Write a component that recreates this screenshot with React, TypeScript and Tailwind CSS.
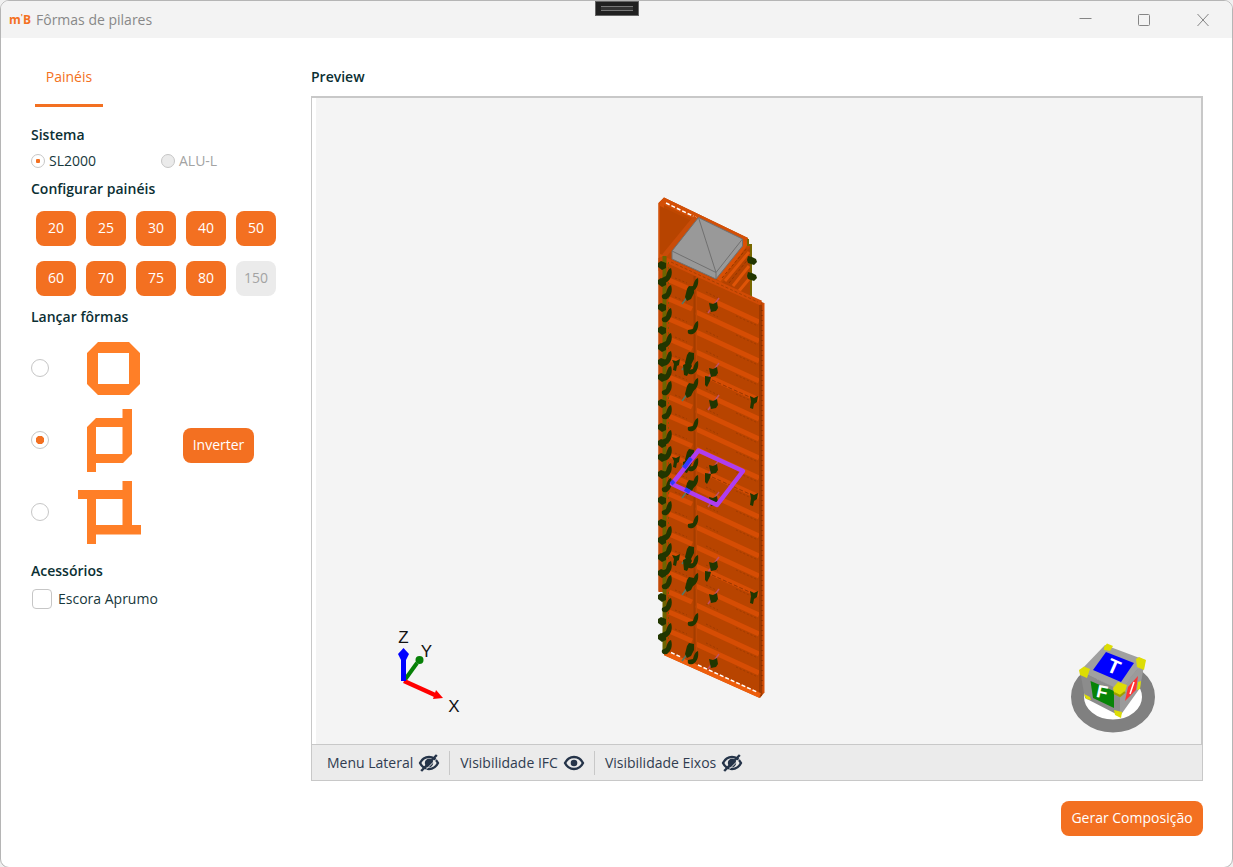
import { useState } from "react";
import type { ReactNode } from "react";

const panelSizes = [20, 25, 30, 40, 50, 60, 70, 75, 80, 150];

const edgeHooks = [275, 292, 315, 340, 358, 373, 388, 412, 437, 453, 470, 485, 508, 533, 550, 568, 582, 605, 630, 647];
const edgeBolts = [265, 282, 307, 330, 347, 362, 377, 403, 427, 443, 457, 474, 500, 523, 540, 557, 573, 597, 621, 637];
const seamHooks = [285, 328, 368, 385, 425, 465, 482, 522, 562, 580, 620, 658];
const tieRods = [293, 359, 390, 456, 487, 553, 584, 650];
const pinRods = [306, 371, 403, 468, 500, 565, 597, 662];
const levels = [0, 97, 195];
const ribs = [293, 312, 332, 352, 371, 390, 410, 429, 449, 468, 488, 507, 527, 547, 566, 586, 605, 625, 644];

const primary =
  "flex h-[35px] items-center justify-center rounded-lg bg-[#f37021] pb-px text-sm text-white disabled:bg-[#ebebeb] disabled:text-[#a3a3a3]";

const radioLarge =
  "size-[18px] shrink-0 appearance-none rounded-full border border-[#c6c6c6] bg-white checked:bg-[radial-gradient(circle,#f37021_4px,transparent_4.5px)]";
const radioSmall =
  "size-[14px] shrink-0 appearance-none rounded-full border border-[#c6c6c6] bg-white checked:bg-[radial-gradient(circle,#f37021_2px,transparent_2.5px)] disabled:bg-[#ebebeb]";

function Heading({ children }: { children: ReactNode }) {
  return <h2 className="text-sm leading-5 font-semibold text-[#0b2f33]">{children}</h2>;
}

function Eye({ off = false }: { off?: boolean }) {
  return (
    <svg viewBox="0 0 22 20" className="h-5 w-[22px]" aria-hidden="true">
      <path
        d="M2 10C4 6 7.200 4 11 4s7 2 9 6c-2 4-5.200 6-9 6s-7-2-9-6Z"
        fill="none"
        stroke="#253449"
        strokeWidth="2.400"
        strokeLinejoin="round"
      />
      <circle cx="11" cy="10" r={off ? 4.2 : 3.3} fill="#253449" />
      {off && (
        <>
          <path d="M5 19.500 20.500 4" stroke="#ebebeb" strokeWidth="1" />
          <path d="M3.200 18 18.800 2" stroke="#253449" strokeWidth="2.400" />
        </>
      )}
    </svg>
  );
}

function ColumnModel() {
  return (
    <g>
      <path d="M658.500 203 664 197.500 748 238v5l4 4v51l-12 10-81.500 284Z" fill="#be4700" />
      <path d="M658.500 203 664 197.500 748 238v6L664 205v61l-5.500 5Z" fill="#d34f06" />
      <path d="M660 206 694 222 666 256 660 254Z" fill="#b74400" />
      <path d="M666 203 697 218" stroke="#fff" strokeWidth="1.500" strokeDasharray="4 2" />
      <path d="M664 256 696 217" stroke="#c94c08" strokeWidth="5" />
      <path d="M718 280 746 242" stroke="#d95005" strokeWidth="6" />
      <path d="M722 283 750 247v50l-14-3Z" fill="#b34200" />
      <path d="M725 281 749 252M733 286 749 266M739 291 749 279" stroke="#df5407" strokeWidth="3" />
      <path d="M722 278 747 248M729 283 749 258" stroke="#943600" strokeWidth="1" strokeDasharray="3 2" />
      <path d="M748 239v6h3v52" fill="none" stroke="#776800" strokeWidth="2" />
      <path d="M664 258 764 303V693L760 698 664 655Z" fill="#b84400" />
      <path d="M658.500 258 664 256V592H658.500Z" fill="#c34904" />
      <g fill="none">
        {ribs.map((y) => (
          <g key={y}>
            <path d={`M669 ${y - 13} 692 ${y - 3}M696 ${y} 759 ${y + 29}`} stroke="#d64d04" strokeWidth="5" />
            <path d={`M675 ${y - 15} 687 ${y - 10}M706 ${y - 1} 718 ${y + 5}M736 ${y + 23} 758 ${y + 33}`} stroke="#a03b00" strokeWidth="1" strokeDasharray="2 2" />
          </g>
        ))}
        {levels.map((d) => (
          <path key={d} d={`M712 ${380 + d} 754 ${399 + d}`} stroke="#963700" strokeDasharray="4 2" />
        ))}
        <path d="M666 260 761 303" stroke="#d04b05" strokeWidth="5" />
        <path d="M671 262 758 302" stroke="#a84000" strokeDasharray="3 2" />
        <path d="M694.500 276V662" stroke="#a33d00" strokeWidth="2" />
        <path d="M696.500 277V662" stroke="#bf4803" strokeWidth="1" />
        <path d="M760.500 305V696" stroke="#9e3900" strokeWidth="3" />
        <path d="M763.500 303V693" stroke="#d54f07" strokeWidth="2" />
        <path d="M762 310V690" stroke="#6f2800" strokeDasharray="1 4" />
        <path d="M664.500 256V651" stroke="#6d6500" strokeWidth="4" />
        <path d="M668.500 262V650" stroke="#766000" strokeDasharray="2 3" />
        <path d="M665 653 760 695.500" stroke="#ed5e0c" strokeWidth="5" />
        <path d="M671 652.500 681 657M698 665 757 692" stroke="#fff" strokeWidth="1.500" strokeDasharray="4 2" />
      </g>
      <path d="M698.500 217.500 742.500 239v7L716 279 672 259v-8Z" fill="#999" />
      <path d="M672 251 698.500 217.500 742.500 239 716 272.500ZM698.500 217.500 716 272.500M716 272.500v6.500M672 251v8l44 20 26.500-33v-7" fill="none" stroke="#707070" />
      <g fill="#213600">
        {edgeHooks.map((y) => (
          <path key={y} d={`M671 ${y - 7}c2 6 0 11-4 14-4 1-6-1-5-4l4-2c1-4 2-7 5-8Z`} />
        ))}
        {edgeBolts.map((y) => (
          <path key={y} d={`M658 ${y - 2}l3-2 5 2v5l-4 2-4-3Z`} />
        ))}
        {seamHooks.map((y) => (
          <path key={y} d={`M698 ${y - 7}c1 6-1 11-5 13-4 1-6 0-5-4l5-1c1-4 2-7 5-8Z`} />
        ))}
      </g>
      {tieRods.map((y) => (
        <g key={y}>
          <path d={`M682 ${y + 11} 691 ${y - 1}`} stroke="#557966" strokeWidth="1.500" />
          <path d={`M687 ${y - 4}l2-3 5 1v6l-3 6-4 2-2-4Z`} fill="#213600" />
        </g>
      ))}
      {pinRods.map((y) => (
        <g key={y}>
          <path d={`M708 ${y + 7} 719 ${y - 8}`} stroke="#c05266" strokeWidth="1.500" />
          <path d={`M709 ${y - 3}l4 1 4-2 1 6-2 3-5 1-1-4Z`} fill="#213600" />
        </g>
      ))}
      {levels.map((d) => (
        <path
          key={d}
          d={`M672 ${360 + d}l4 1 4-2-1 6-2 1-1 5-3-1 1-6ZM683 ${365 + d}l7-3 2 4-5 10-3-1ZM705 ${376 + d}l6 1-1 4-3 6-2-2ZM750 ${396 + d}l4 2 4-2-1 6-3 2-1 5-3-1 1-7Z`}
          fill="#213600"
        />
      ))}
      <path d="M748 256l4 1 4 2 1 3-3 3-6-2-1-3ZM748 272l4 1 4 2 1 3-3 3-6-2-1-3Z" fill="#213600" />
      <path d="M698.500 450.500 743 471 717 505 672 484Z" fill="none" stroke="#ae3df0" strokeWidth="4.500" strokeLinejoin="round" />
      <path d="M684 468 691 458M685 489 690 492M671 484 674 481" stroke="#303aff" strokeWidth="4" />
    </g>
  );
}

function Axes() {
  return (
    <g>
      <path d="M404 681 417 663" stroke="#078007" strokeWidth="4" />
      <circle cx="419.500" cy="660" r="4" fill="#078007" />
      <path d="M404 681 435 695" stroke="#f00" strokeWidth="4.500" />
      <path d="M436 690 443 698 433 699Z" fill="#f00" />
      <path d="M403.500 681V656" stroke="#00f" strokeWidth="5" />
      <path d="M403.500 648 409 654 406 660H401L398 654Z" fill="#00f" />
      <g fill="#111" fontFamily="Liberation Sans, sans-serif" fontSize="17" textAnchor="middle">
        <text x="403.500" y="643">Z</text>
        <text x="426.500" y="657">Y</text>
        <text x="454" y="712">X</text>
      </g>
    </g>
  );
}

function ViewCube() {
  return (
    <g>
      <ellipse cx="1113" cy="697" rx="35.500" ry="29" fill="#fff" stroke="#808080" strokeWidth="13" />
      <path d="M1080 671 1105 645 1145 660 1120 691Z" fill="#a0a0a0" />
      <path d="M1080 671 1120 690V716L1085 698Z" fill="#8c8c8c" />
      <path d="M1120 690 1145 660 1140 688 1120 716Z" fill="#9b9b9b" />
      <path d="M1106 652 1134 663 1121 682 1093 670Z" fill="#00f" />
      <path d="M1090.500 681 1114 691V708L1093 698Z" fill="#078407" />
      <path d="M1138 676 1128 687 1125 701 1136 690Z" fill="#f33" />
      <path d="M1134 682 1130 694" stroke="#fff" strokeWidth="1.500" />
      <g fill="#dddd05">
        <path d="M1104 647 1107 643.500 1113 646 1110 651 1104 650Z" />
        <path d="M1136 659 1139 657 1146 660 1144 670 1137 667Z" />
        <path d="M1079 670 1084 666.500 1090 669 1087 678 1080 675Z" />
        <path d="M1113 688 1118 682 1127 685 1125 692 1120 697 1114 693Z" />
        <path d="M1084 694 1090 697 1091 700 1086 699Z" />
        <path d="M1114 710 1122 712 1121 718 1115 715Z" />
        <path d="M1138 682 1141 681 1140 689 1137 690Z" />
      </g>
      <path d="M1114 693 1120 696 1125 692" fill="none" stroke="#9f9f00" strokeWidth="2" />
      <g fill="#fff" fontFamily="Liberation Sans, sans-serif" fontWeight="700" textAnchor="middle">
        <text fontSize="20" transform="translate(1111 673) rotate(24)">T</text>
        <text fontSize="18" transform="translate(1101 698) rotate(12)">F</text>
      </g>
    </g>
  );
}

const shapes = [
  {
    name: "Fechado",
    path: "M21 6H52L63 17V48L52 59H21L10 48V17ZM21 17V48H52V17Z",
  },
  {
    name: "Catavento",
    path: "M45.500 1H55V46L46 55H19V64H10V19L19 10H45.500ZM19 19V46H45.500V19Z",
  },
  {
    name: "Cruzado",
    path: "M45.500 1H55V45H64V54.500H19V64H10V19H1V10H45.500ZM19 19V45H45.500V19Z",
  },
];

export default function App() {
  const [system, setSystem] = useState("sl2000");
  const [shape, setShape] = useState("Catavento");

  return (
    <div className="min-h-screen bg-[#f0f0f0] font-['Open_Sans','Noto_Sans',sans-serif] text-sm text-[#17383c]">
      <div className="flex min-h-screen flex-col overflow-hidden rounded-[9px] border border-[#b5b5b5] bg-white">
        <header className="relative flex h-[37px] shrink-0 items-center bg-[#f3f3f3] pl-2">
          <span className="text-xs font-bold text-[#f37021]" aria-hidden="true">m<sup className="text-[8px] leading-none">'</sup>B</span>
          <h1 className="ml-[5px] flex-1 text-sm text-[#888]">Fôrmas de pilares</h1>
          <div className="absolute top-0 left-1/2 h-[15px] w-11 -translate-x-1/2 border border-[#666] bg-[#202020] px-[5px] pt-[4px]">
            <div className="h-[5px] border-y border-[#777] bg-[#333]" />
          </div>
          <div className="flex h-full text-[#858585]">
            {[
              ["Minimizar", "M3.500 7.500H15.500"],
              ["Maximizar", "M4.500 3.500H13.500Q14.500 3.500 14.500 4.500V13.500Q14.500 14.500 13.500 14.500H4.500Q3.500 14.500 3.500 13.500V4.500Q3.500 3.500 4.500 3.500Z"],
              ["Fechar", "M3.500 3 14.500 15M14.500 3 3.500 15"],
            ].map(([label, d]) => (
              <button key={label} type="button" aria-label={label} className="flex w-[59px] items-center justify-center">
                <svg viewBox="0 0 18 18" className="size-[18px]" fill="none" stroke="currentColor">
                  <path d={d} />
                </svg>
              </button>
            ))}
          </div>
        </header>

        <main className="flex flex-1 pr-[29px] pl-[30px]">
          <aside className="w-[280px] shrink-0 pt-[29px]">
            <button type="button" className="ml-1 flex h-10 w-[68px] justify-center border-b-[3px] border-[#f37021] text-sm leading-5 text-[#f37021]">
              Painéis
            </button>

            <section className="mt-[18px]">
              <Heading>Sistema</Heading>
              <div className="mt-[6px] flex h-5 items-center">
                <label className="flex w-[130px] items-center gap-1">
                  <input type="radio" name="system" className={radioSmall} checked={system === "sl2000"} onChange={() => setSystem("sl2000")} />
                  SL2000
                </label>
                <label className="flex items-center gap-1 text-[#a3a3a3]">
                  <input type="radio" name="system" className={radioSmall} disabled />
                  ALU-L
                </label>
              </div>
            </section>

            <section className="mt-2">
              <Heading>Configurar painéis</Heading>
              <div className="mt-3 ml-[5px] grid w-60 grid-cols-5 gap-x-[10px] gap-y-[15px]">
                {panelSizes.map((n) => (
                  <button key={n} type="button" disabled={n === 150} className={primary}>
                    {n}
                  </button>
                ))}
              </div>
            </section>

            <section className="mt-[11px]">
              <Heading>Lançar fôrmas</Heading>
              <div className="mt-[5px]">
                {shapes.map((s) => (
                  <div key={s.name} className="flex h-[72px] items-center">
                    <label className="flex w-[152px] items-center gap-7">
                      <input type="radio" name="shape" aria-label={s.name} className={radioLarge} checked={shape === s.name} onChange={() => setShape(s.name)} />
                      <svg viewBox="0 0 65 65" className="size-[65px]" aria-hidden="true">
                        <path d={s.path} fill="#ff7f27" fillRule="evenodd" />
                      </svg>
                    </label>
                    {s.name === "Catavento" && (
                      <button type="button" className={`${primary} mt-[10px] w-[71px]`}>
                        Inverter
                      </button>
                    )}
                  </div>
                ))}
              </div>
            </section>

            <section className="mt-[13px]">
              <Heading>Acessórios</Heading>
              <label className="mt-2 ml-px flex items-center gap-[6px]">
                <input type="checkbox" className="size-5 appearance-none rounded-[4px] border border-[#c6c6c6] bg-white checked:bg-[#f37021]" />
                Escora Aprumo
              </label>
            </section>
          </aside>

          <section className="flex min-w-0 flex-1 flex-col pt-[29px] pb-[31px]">
            <Heading>Preview</Heading>
            <div className="mt-[9px] flex min-h-0 flex-1 flex-col border border-[#c8c8c8]">
              <div className="flex min-h-0 flex-1 border-t border-r border-[#c8c8c8] bg-white pl-1">
                <svg viewBox="316 98 885 646" className="min-w-0 flex-1 bg-[#f4f4f4]" role="img" aria-label="Modelo 3D do pilar">
                  <ColumnModel />
                  <Axes />
                  <ViewCube />
                </svg>
              </div>
              <div className="flex h-9 shrink-0 items-center border-t border-[#c8c8c8] bg-[#ebebeb] pl-[6px] text-[#303c50]">
                {[
                  ["Menu Lateral", true],
                  ["Visibilidade IFC", false],
                  ["Visibilidade Eixos", true],
                ].map(([label, off], i) => (
                  <button
                    key={String(label)}
                    type="button"
                    className={`flex h-6 items-center gap-[5px] pr-[9px] ${i > 0 ? "border-l border-[#c8c8c8] pl-[10px]" : "pl-[9px]"}`}
                  >
                    {label}
                    <Eye off={Boolean(off)} />
                  </button>
                ))}
              </div>
            </div>
            <button type="button" className={`${primary} mt-5 w-[142px] self-end`}>
              Gerar Composição
            </button>
          </section>
        </main>
      </div>
    </div>
  );
}
